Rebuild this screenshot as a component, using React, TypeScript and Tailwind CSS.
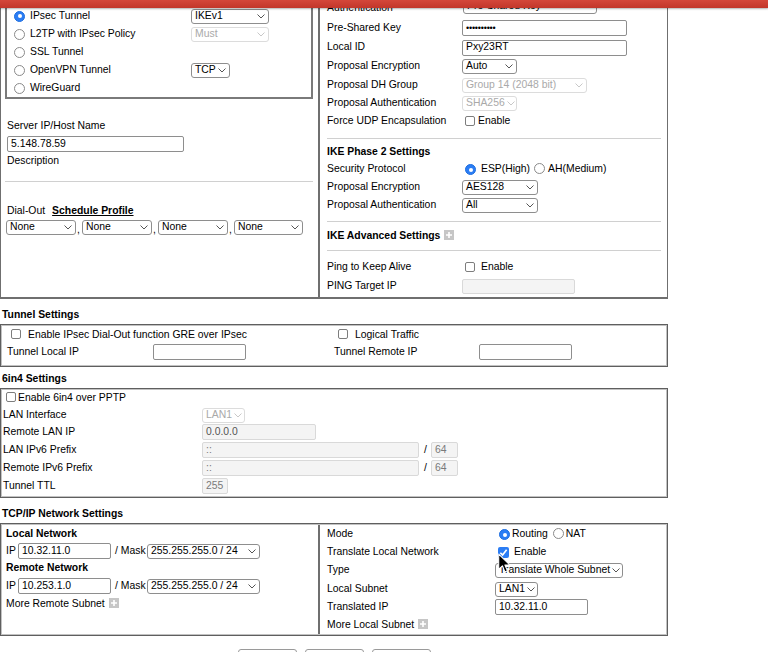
import React from "react";
import clsx from "clsx";

const Chevron = ({ disabled }: { disabled?: boolean }) => (
  <svg width="8" height="5" viewBox="0 0 8 5" className="ml-[2px] shrink-0">
    <polyline
      points="0.5,0.5 4,4 7.5,0.5"
      fill="none"
      stroke={disabled ? "#c8c8c8" : "#555"}
      strokeWidth="1"
    />
  </svg>
);

function Select({
  value,
  className,
  disabled,
}: {
  value: string;
  className: string;
  disabled?: boolean;
}) {
  return (
    <div
      className={clsx(
        "inline-flex h-[15px] shrink-0 items-center justify-between rounded-[3px] border bg-white pl-[3px] pr-[3px]",
        disabled ? "border-[#dcdcdc] text-[#a9a9a9]" : "border-[#8e8e8e] text-black",
        className
      )}
    >
      <span className="whitespace-nowrap">{value}</span>
      <Chevron disabled={disabled} />
    </div>
  );
}

function Input({
  value,
  className,
  disabled,
}: {
  value?: React.ReactNode;
  className: string;
  disabled?: boolean;
}) {
  return (
    <div
      className={clsx(
        "flex shrink-0 items-center rounded-[2px] border px-[3px] whitespace-nowrap",
        disabled
          ? "border-[#d9d9d9] bg-[#f4f4f4] text-[#7a7a7a]"
          : "border-[#8e8e8e] bg-white text-black",
        className
      )}
    >
      {value}
    </div>
  );
}

const Radio = ({ checked }: { checked?: boolean }) =>
  checked ? (
    <span className="inline-flex h-[11px] w-[11px] shrink-0 items-center justify-center rounded-full border border-[#1d6ee0] bg-[#2b7df4]">
      <span className="h-[4px] w-[4px] rounded-full bg-white" />
    </span>
  ) : (
    <span className="inline-block h-[11px] w-[11px] shrink-0 rounded-full border border-[#8a8a8a] bg-white" />
  );

const Checkbox = ({ checked }: { checked?: boolean }) =>
  checked ? (
    <span className="inline-flex h-[11px] w-[11px] shrink-0 items-center justify-center rounded-[2px] bg-[#2b7df4]">
      <svg width="9" height="9" viewBox="0 0 8 8">
        <polyline points="1.2,4.2 3.2,6.2 6.8,1.6" fill="none" stroke="white" strokeWidth="1.5" />
      </svg>
    </span>
  ) : (
    <span className="inline-block h-[10px] w-[10px] shrink-0 rounded-[2px] border border-[#7d7d7d] bg-white" />
  );

const Plus = () => (
  <span className="inline-flex h-[10px] w-[10px] shrink-0 items-center justify-center bg-[#c6c6c6]">
    <svg width="8" height="8" viewBox="0 0 8 8">
      <path d="M4 1 V7 M1 4 H7" stroke="white" strokeWidth="1.6" />
    </svg>
  </span>
);

function RRow({
  label,
  h,
  children,
}: {
  label: React.ReactNode;
  h: string;
  children?: React.ReactNode;
}) {
  return (
    <div className={clsx("flex items-center", h)}>
      <span className="w-[135px] shrink-0 whitespace-nowrap">{label}</span>
      {children}
    </div>
  );
}

function SixRow({
  label,
  h,
  children,
}: {
  label: React.ReactNode;
  h: string;
  children?: React.ReactNode;
}) {
  return (
    <div className={clsx("flex items-center", h)}>
      <span className="w-[199px] shrink-0 whitespace-nowrap">{label}</span>
      {children}
    </div>
  );
}

function TRow({
  label,
  h,
  children,
}: {
  label: React.ReactNode;
  h: string;
  children?: React.ReactNode;
}) {
  return (
    <div className={clsx("flex items-center", h)}>
      <span className="w-[168px] shrink-0 whitespace-nowrap">{label}</span>
      {children}
    </div>
  );
}

export default function App() {
  return (
    <div className="relative h-[652px] w-[768px] overflow-hidden bg-white font-['Liberation_Sans',Arial,sans-serif] text-[10.4px] leading-none text-black">
      {/* fixed red header */}
      <div className="absolute inset-x-0 top-0 z-10 h-[8px] bg-gradient-to-b from-[#d4473a] to-[#c2362a] shadow-[0_1px_2px_rgba(0,0,0,0.3)]" />

      <div className="-mt-[5px] w-[668px]">
        {/* Top table */}
        <div className="flex h-[304px] border-b-2 border-l border-r border-[#6f6f6f]">
          {/* Left cell */}
          <div className="w-[319px] shrink-0 border-r-2 border-[#6f6f6f] pl-[4px]">
            <div className="mt-[9px] w-[308px] border-2 border-[#7a7a7a] pt-[1px]">
              {[
                { l: "IPsec Tunnel", c: true, s: <Select value="IKEv1" className="w-[78px]" /> },
                { l: "L2TP with IPsec Policy", s: <Select value="Must" className="w-[78px]" disabled /> },
                { l: "SSL Tunnel" },
                { l: "OpenVPN Tunnel", s: <Select value="TCP" className="w-[39px]" /> },
                { l: "WireGuard" },
              ].map((r) => (
                <div key={r.l} className="flex h-[18px] items-center pl-[7px]">
                  <div className="flex w-[177px] shrink-0 items-center">
                    <Radio checked={r.c} />
                    <span className="ml-[5px]">{r.l}</span>
                  </div>
                  {r.s}
                </div>
              ))}
            </div>
            <div className="mt-[19px] flex h-[16px] items-center pl-[2px]">Server IP/Host Name</div>
            <Input value="5.148.78.59" className="ml-[2px] mt-[2px] h-[16px] w-[177px]" />
            <div className="mt-[1px] flex h-[16px] items-center pl-[2px]">Description</div>
            <div className="mt-[12px] h-px w-[308px] bg-[#d0d0d0]" />
            <div className="mt-[21px] flex h-[16px] items-center pl-[2px]">
              <span>Dial-Out</span>
              <span className="ml-[7px] font-bold underline">Schedule Profile</span>
            </div>
            <div className="mt-[1px] flex items-end pl-[1px]">
              <Select value="None" className="w-[70px]" />
              <span className="w-[6px] pl-[1px]">,</span>
              <Select value="None" className="w-[70px]" />
              <span className="w-[6px] pl-[1px]">,</span>
              <Select value="None" className="w-[70px]" />
              <span className="w-[6px] pl-[1px]">,</span>
              <Select value="None" className="w-[69px]" />
            </div>
          </div>

          {/* Right cell */}
          <div className="flex-1 pl-[7px] pr-[6px]">
            <RRow label="Authentication" h="mt-[3px] h-[20px]">
              <Select value="Pre-Shared Key" className="relative -top-[2px] ml-[1px] w-[134px]" />
            </RRow>
            <RRow label="Pre-Shared Key" h="h-[20px]">
              <Input
                value={<span className="text-[9px] tracking-[-0.2px]">••••••••••</span>}
                className="h-[16px] w-[165px]"
              />
            </RRow>
            <RRow label="Local ID" h="h-[19px]">
              <Input value="Pxy23RT" className="h-[16px] w-[165px]" />
            </RRow>
            <RRow label="Proposal Encryption" h="h-[19px]">
              <Select value="Auto" className="w-[55px]" />
            </RRow>
            <RRow label="Proposal DH Group" h="h-[18px]">
              <Select value="Group 14 (2048 bit)" className="w-[125px]" disabled />
            </RRow>
            <RRow label="Proposal Authentication" h="h-[18px]">
              <Select value="SHA256" className="w-[55px]" disabled />
            </RRow>
            <RRow label="Force UDP Encapsulation" h="h-[18px]">
              <span className="ml-[3px] flex items-center">
                <Checkbox />
                <span className="ml-[3px]">Enable</span>
              </span>
            </RRow>
            <div className="mt-[8px] h-px bg-[#d0d0d0]" />
            <div className="mt-[4px] flex h-[18px] items-center font-bold">IKE Phase 2 Settings</div>
            <RRow label="Security Protocol" h="h-[17px]">
              <span className="ml-[3px] flex items-center">
                <Radio checked />
                <span className="ml-[5px]">ESP(High)</span>
                <span className="ml-[4px]">
                  <Radio />
                </span>
                <span className="ml-[3px]">AH(Medium)</span>
              </span>
            </RRow>
            <RRow label="Proposal Encryption" h="h-[18px]">
              <Select value="AES128" className="w-[76px]" />
            </RRow>
            <RRow label="Proposal Authentication" h="h-[18px]">
              <Select value="All" className="w-[76px]" />
            </RRow>
            <div className="mt-[7px] h-px bg-[#d0d0d0]" />
            <div className="mt-[5px] flex h-[18px] items-center font-bold">
              IKE Advanced Settings
              <span className="ml-[4px]">
                <Plus />
              </span>
            </div>
            <div className="mt-[5px] h-px bg-[#d0d0d0]" />
            <RRow label="Ping to Keep Alive" h="mt-[7px] h-[18px]">
              <span className="ml-[3px] flex items-center">
                <Checkbox />
                <span className="ml-[6px]">Enable</span>
              </span>
            </RRow>
            <RRow label="PING Target IP" h="mt-[1px] h-[18px]">
              <Input disabled className="h-[15px] w-[113px]" />
            </RRow>
          </div>
        </div>

        {/* Tunnel Settings */}
        <div className="mt-[8px] flex h-[16px] items-center pl-[2px] font-bold">Tunnel Settings</div>
        <div className="mt-[1px] border border-[#5f5f5f]">
          <div className="h-[41px] border border-[#c2c2c2] pl-[5px] pt-[1px]">
            <div className="flex h-[16px] items-center">
              <div className="flex w-[327px] shrink-0 items-center">
                <span className="ml-[4px]">
                  <Checkbox />
                </span>
                <span className="ml-[7px]">Enable IPsec Dial-Out function GRE over IPsec</span>
              </div>
              <span className="ml-[4px]">
                <Checkbox />
              </span>
              <span className="ml-[7px]">Logical Traffic</span>
            </div>
            <div className="flex h-[18px] items-center">
              <span className="w-[146px] shrink-0">Tunnel Local IP</span>
              <Input className="h-[16px] w-[93px]" />
              <span className="w-[88px] shrink-0" />
              <span className="w-[145px] shrink-0">Tunnel Remote IP</span>
              <Input className="h-[16px] w-[93px]" />
            </div>
          </div>
        </div>

        {/* 6in4 Settings */}
        <div className="mt-[4px] flex h-[16px] items-center pl-[2px] font-bold">6in4 Settings</div>
        <div className="mt-[1px] border border-[#5f5f5f]">
          <div className="border border-[#c2c2c2] pl-[1px] pb-[1px]">
            <div className="flex h-[17px] items-center">
              <span className="ml-[3px]">
                <Checkbox />
              </span>
              <span className="ml-[2px]">Enable 6in4 over PPTP</span>
            </div>
            <SixRow label="LAN Interface" h="h-[16px]">
              <Select value="LAN1" className="w-[43px]" disabled />
            </SixRow>
            <SixRow label="Remote LAN IP" h="h-[18px]">
              <Input value={<span className="text-[#555]">0.0.0.0</span>} disabled className="h-[16px] w-[114px]" />
            </SixRow>
            <SixRow label="LAN IPv6 Prefix" h="h-[18px]">
              <Input value="::" disabled className="h-[16px] w-[217px]" />
              <span className="w-[12px] shrink-0 pl-[5px]">/</span>
              <Input value="64" disabled className="h-[16px] w-[27px]" />
            </SixRow>
            <SixRow label="Remote IPv6 Prefix" h="h-[18px]">
              <Input value="::" disabled className="h-[16px] w-[217px]" />
              <span className="w-[12px] shrink-0 pl-[5px]">/</span>
              <Input value="64" disabled className="h-[16px] w-[27px]" />
            </SixRow>
            <SixRow label="Tunnel TTL" h="h-[18px]">
              <Input value="255" disabled className="h-[16px] w-[26px]" />
            </SixRow>
          </div>
        </div>

        {/* TCP/IP Network Settings */}
        <div className="mt-[8px] flex h-[16px] items-center pl-[2px] font-bold">TCP/IP Network Settings</div>
        <div className="relative mt-[1px] flex border border-[#5f5f5f]">
          <div className="flex flex-1 border border-[#c2c2c2]">
            <div className="w-[318px] shrink-0 border-r-2 border-[#6f6f6f] pl-[4px] pt-[1px]">
              <div className="flex h-[16px] items-center font-bold">Local Network</div>
              <div className="flex h-[18px] items-center">
                <span className="w-[12px] shrink-0">IP</span>
                <Input value="10.32.11.0" className="h-[16px] w-[93px]" />
                <span className="ml-[4px] w-[32px] shrink-0 whitespace-nowrap">/ Mask</span>
                <Select value="255.255.255.0 / 24" className="w-[113px]" />
              </div>
              <div className="flex h-[17px] items-center font-bold">Remote Network</div>
              <div className="flex h-[18px] items-center">
                <span className="w-[12px] shrink-0">IP</span>
                <Input value="10.253.1.0" className="h-[16px] w-[93px]" />
                <span className="ml-[4px] w-[32px] shrink-0 whitespace-nowrap">/ Mask</span>
                <Select value="255.255.255.0 / 24" className="w-[113px]" />
              </div>
              <div className="flex h-[18px] items-center">
                More Remote Subnet
                <span className="ml-[4px]">
                  <Plus />
                </span>
              </div>
            </div>
            <div className="flex-1 pl-[7px] pt-[1px]">
              <TRow label="Mode" h="h-[17px]">
                <span className="ml-[4px] flex items-center">
                  <Radio checked />
                  <span className="ml-[2px]">Routing</span>
                  <span className="ml-[5px]">
                    <Radio />
                  </span>
                  <span className="ml-[2px]">NAT</span>
                </span>
              </TRow>
              <TRow label="Translate Local Network" h="h-[18px]">
                <span className="ml-[3px] flex items-center">
                  <Checkbox checked />
                  <span className="ml-[5px]">Enable</span>
                </span>
              </TRow>
              <TRow label="Type" h="h-[19px]">
                <Select value="Translate Whole Subnet" className="w-[128px]" />
              </TRow>
              <TRow label="Local Subnet" h="h-[18px]">
                <Select value="LAN1" className="w-[43px]" />
              </TRow>
              <TRow label="Translated IP" h="h-[18px]">
                <Input value="10.32.11.0" className="h-[16px] w-[93px]" />
              </TRow>
              <div className="flex h-[18px] items-center">
                More Local Subnet
                <span className="ml-[4px]">
                  <Plus />
                </span>
              </div>
            </div>
          </div>
        </div>

        {/* Buttons */}
        <div className="mt-[13px] flex justify-center gap-[8px]">
          <div className="h-[18px] w-[59px] rounded-[3px] border border-[#9a9a9a] bg-white" />
          <div className="h-[18px] w-[59px] rounded-[3px] border border-[#9a9a9a] bg-white" />
          <div className="h-[18px] w-[59px] rounded-[3px] border border-[#9a9a9a] bg-white" />
        </div>
      </div>

      {/* mouse cursor */}
      <svg width="15" height="21" viewBox="0 0 14 20" className="absolute left-[497px] top-[553px] z-20">
        <path
          d="M1.5 1 L1.5 15.5 L5 12.2 L7.4 18 L9.8 17 L7.4 11.4 L12 11.4 Z"
          fill="black"
          stroke="white"
          strokeWidth="1"
          strokeLinejoin="round"
        />
      </svg>
    </div>
  );
}
